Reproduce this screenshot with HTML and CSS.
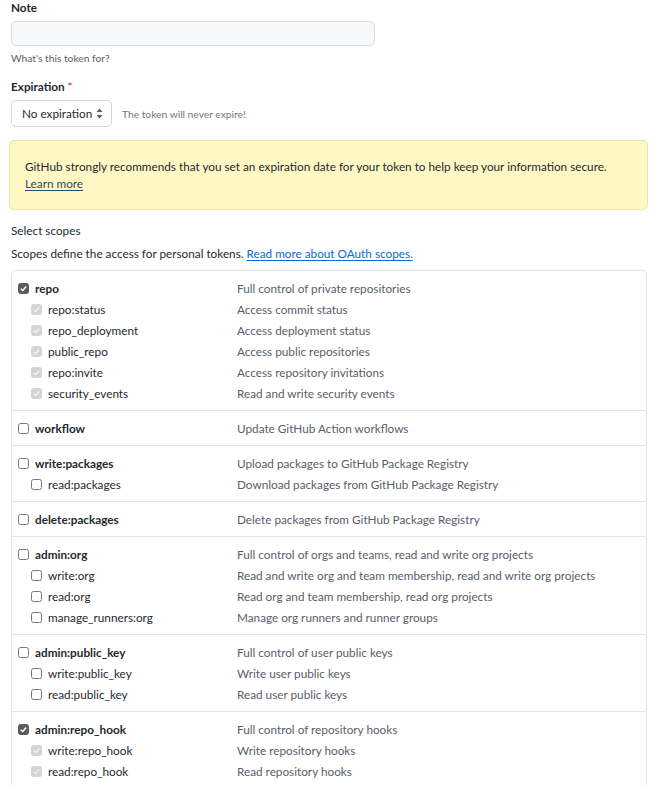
FILE: index.html
```html
<!DOCTYPE html>
<html lang="en">
<head>
<meta charset="utf-8">
<title>New personal access token</title>
<link rel="stylesheet" href="styles.css">
</head>
<body>
<div class="page">
  <div class="field">
    <label class="lbl">Note</label>
    <div class="note-input"></div>
    <p class="hint">What's this token for?</p>
  </div>

  <div class="field exp">
    <label class="lbl">Expiration <span class="req">*</span></label>
    <div class="exp-row">
      <div class="select">
        <span>No expiration</span>
        <svg class="updown" width="7" height="11" viewBox="0 0 7 11"><path d="M3.5 0.5 L6.5 4 L0.5 4 Z M3.5 10.5 L6.5 7 L0.5 7 Z" fill="#57606a"/></svg>
      </div>
      <span class="exp-note">The token will never expire!</span>
    </div>
  </div>

  <div class="flash">
    GitHub strongly recommends that you set an expiration date for your token to help keep your information secure.<br>
    <a class="flash-link" href="#">Learn more</a>
  </div>

  <h3 class="scopes-title">Select scopes</h3>
  <p class="scopes-desc">Scopes define the access for personal tokens. <a class="link" href="#">Read more about OAuth scopes.</a></p>

  <div class="scopes">
    <div class="group">
      <div class="row parent"><span class="name"><span class="cb on"><svg viewBox="0 0 10 10"><path d="M2 5.2 L4.2 7.3 L8 2.8" fill="none" stroke="#fff" stroke-width="1.6"/></svg></span>repo</span><span class="desc">Full control of private repositories</span></div>
      <div class="row child"><span class="name"><span class="cb dis"><svg viewBox="0 0 10 10"><path d="M2 5.2 L4.2 7.3 L8 2.8" fill="none" stroke="#f4f4f4" stroke-width="1.4"/></svg></span>repo:status</span><span class="desc">Access commit status</span></div>
      <div class="row child"><span class="name"><span class="cb dis"><svg viewBox="0 0 10 10"><path d="M2 5.2 L4.2 7.3 L8 2.8" fill="none" stroke="#f4f4f4" stroke-width="1.4"/></svg></span>repo_deployment</span><span class="desc">Access deployment status</span></div>
      <div class="row child"><span class="name"><span class="cb dis"><svg viewBox="0 0 10 10"><path d="M2 5.2 L4.2 7.3 L8 2.8" fill="none" stroke="#f4f4f4" stroke-width="1.4"/></svg></span>public_repo</span><span class="desc">Access public repositories</span></div>
      <div class="row child"><span class="name"><span class="cb dis"><svg viewBox="0 0 10 10"><path d="M2 5.2 L4.2 7.3 L8 2.8" fill="none" stroke="#f4f4f4" stroke-width="1.4"/></svg></span>repo:invite</span><span class="desc">Access repository invitations</span></div>
      <div class="row child"><span class="name"><span class="cb dis"><svg viewBox="0 0 10 10"><path d="M2 5.2 L4.2 7.3 L8 2.8" fill="none" stroke="#f4f4f4" stroke-width="1.4"/></svg></span>security_events</span><span class="desc">Read and write security events</span></div>
    </div>

    <div class="group">
      <div class="row parent"><span class="name"><span class="cb"></span>workflow</span><span class="desc">Update GitHub Action workflows</span></div>
    </div>

    <div class="group">
      <div class="row parent"><span class="name"><span class="cb"></span>write:packages</span><span class="desc">Upload packages to GitHub Package Registry</span></div>
      <div class="row child"><span class="name"><span class="cb"></span>read:packages</span><span class="desc">Download packages from GitHub Package Registry</span></div>
    </div>

    <div class="group">
      <div class="row parent"><span class="name"><span class="cb"></span>delete:packages</span><span class="desc">Delete packages from GitHub Package Registry</span></div>
    </div>

    <div class="group">
      <div class="row parent"><span class="name"><span class="cb"></span>admin:org</span><span class="desc">Full control of orgs and teams, read and write org projects</span></div>
      <div class="row child"><span class="name"><span class="cb"></span>write:org</span><span class="desc">Read and write org and team membership, read and write org projects</span></div>
      <div class="row child"><span class="name"><span class="cb"></span>read:org</span><span class="desc">Read org and team membership, read org projects</span></div>
      <div class="row child"><span class="name"><span class="cb"></span>manage_runners:org</span><span class="desc">Manage org runners and runner groups</span></div>
    </div>

    <div class="group">
      <div class="row parent"><span class="name"><span class="cb"></span>admin:public_key</span><span class="desc">Full control of user public keys</span></div>
      <div class="row child"><span class="name"><span class="cb"></span>write:public_key</span><span class="desc">Write user public keys</span></div>
      <div class="row child"><span class="name"><span class="cb"></span>read:public_key</span><span class="desc">Read user public keys</span></div>
    </div>

    <div class="group">
      <div class="row parent"><span class="name"><span class="cb on"><svg viewBox="0 0 10 10"><path d="M2 5.2 L4.2 7.3 L8 2.8" fill="none" stroke="#fff" stroke-width="1.6"/></svg></span>admin:repo_hook</span><span class="desc">Full control of repository hooks</span></div>
      <div class="row child"><span class="name"><span class="cb dis"><svg viewBox="0 0 10 10"><path d="M2 5.2 L4.2 7.3 L8 2.8" fill="none" stroke="#f4f4f4" stroke-width="1.4"/></svg></span>write:repo_hook</span><span class="desc">Write repository hooks</span></div>
      <div class="row child"><span class="name"><span class="cb dis"><svg viewBox="0 0 10 10"><path d="M2 5.2 L4.2 7.3 L8 2.8" fill="none" stroke="#f4f4f4" stroke-width="1.4"/></svg></span>read:repo_hook</span><span class="desc">Read repository hooks</span></div>
    </div>
  </div>
</div>
</body>
</html>
```

FILE: styles.css
```css
html, body {
  height: 100%;
  overflow: hidden;
}

body {
  margin: 0;
  background: #ffffff;
  color: #24292f;
  font-family: Lato, "Segoe UI", "Noto Sans", sans-serif;
  font-size: 11.75px;
}

.page {
  padding: 0 13px 0 11px;
}

.field {
  display: flex;
  flex-direction: column;
  align-items: flex-start;
}

.lbl {
  display: block;
  font-weight: 700;
  font-size: 11.75px;
  line-height: 16px;
  color: #24292f;
}

.req {
  color: #cf222e;
  font-weight: 400;
}

.note-input {
  margin-top: 5px;
  width: 362px;
  height: 23px;
  border: 1px solid #d8dee4;
  border-radius: 5px;
  background: #f6f8fa;
}

.hint {
  margin: 5px 0 0;
  font-size: 10.25px;
  line-height: 14px;
  color: #57606a;
}

.exp {
  margin-top: 14px;
}

.exp-row {
  margin-top: 5px;
  display: flex;
  align-items: center;
  gap: 10px;
}

.select {
  box-sizing: border-box;
  width: 101px;
  height: 27px;
  border: 1px solid #d0d7de;
  border-radius: 5px;
  background: #ffffff;
  display: flex;
  align-items: center;
  justify-content: space-between;
  padding: 0 8px 0 10px;
  font-size: 11.75px;
  color: #24292f;
}

.updown {
  display: block;
}

.exp-note {
  font-size: 10.25px;
  color: #6e7781;
}

.flash {
  margin: 13px -1px 0 -2px;
  padding: 17px 15px;
  border: 1px solid #f0e1a4;
  border-radius: 5px;
  background: #fff8c5;
  line-height: 17px;
  color: #24292f;
}

.flash-link {
  color: #244e72;
  text-decoration: underline;
  text-underline-offset: 2px;
}

.scopes-title {
  margin: 13px 0 0;
  font-size: 11.75px;
  font-weight: 400;
  line-height: 16px;
}

.scopes-desc {
  margin: 7px 0 0;
  line-height: 16px;
}

.link {
  color: #0969da;
  text-decoration: underline;
  text-underline-offset: 2px;
}

.scopes {
  margin-top: 8px;
  border: 1px solid #e1e4e8;
  border-radius: 5px 5px 0 0;
}

.group {
  padding: 7px 0 6px;
}

.group + .group {
  border-top: 1px solid #e1e4e8;
}

.row {
  display: grid;
  grid-template-columns: 219px 1fr;
  height: 21px;
  align-items: center;
  padding-left: 6px;
}

.name {
  display: flex;
  align-items: center;
  gap: 6px;
  color: #24292f;
}

.parent .name {
  font-weight: 700;
}

.child .name {
  padding-left: 13px;
}

.desc {
  color: #57606a;
}

.cb {
  box-sizing: border-box;
  width: 11px;
  height: 11px;
  border: 1px solid #767676;
  border-radius: 2.5px;
  background: #ffffff;
  display: inline-flex;
  flex: none;
}

.cb svg {
  width: 100%;
  height: 100%;
  display: block;
}

.cb.on {
  background: #5c5c5c;
  border-color: #5c5c5c;
}

.cb.dis {
  background: #d4d4d4;
  border-color: #d4d4d4;
}
```
